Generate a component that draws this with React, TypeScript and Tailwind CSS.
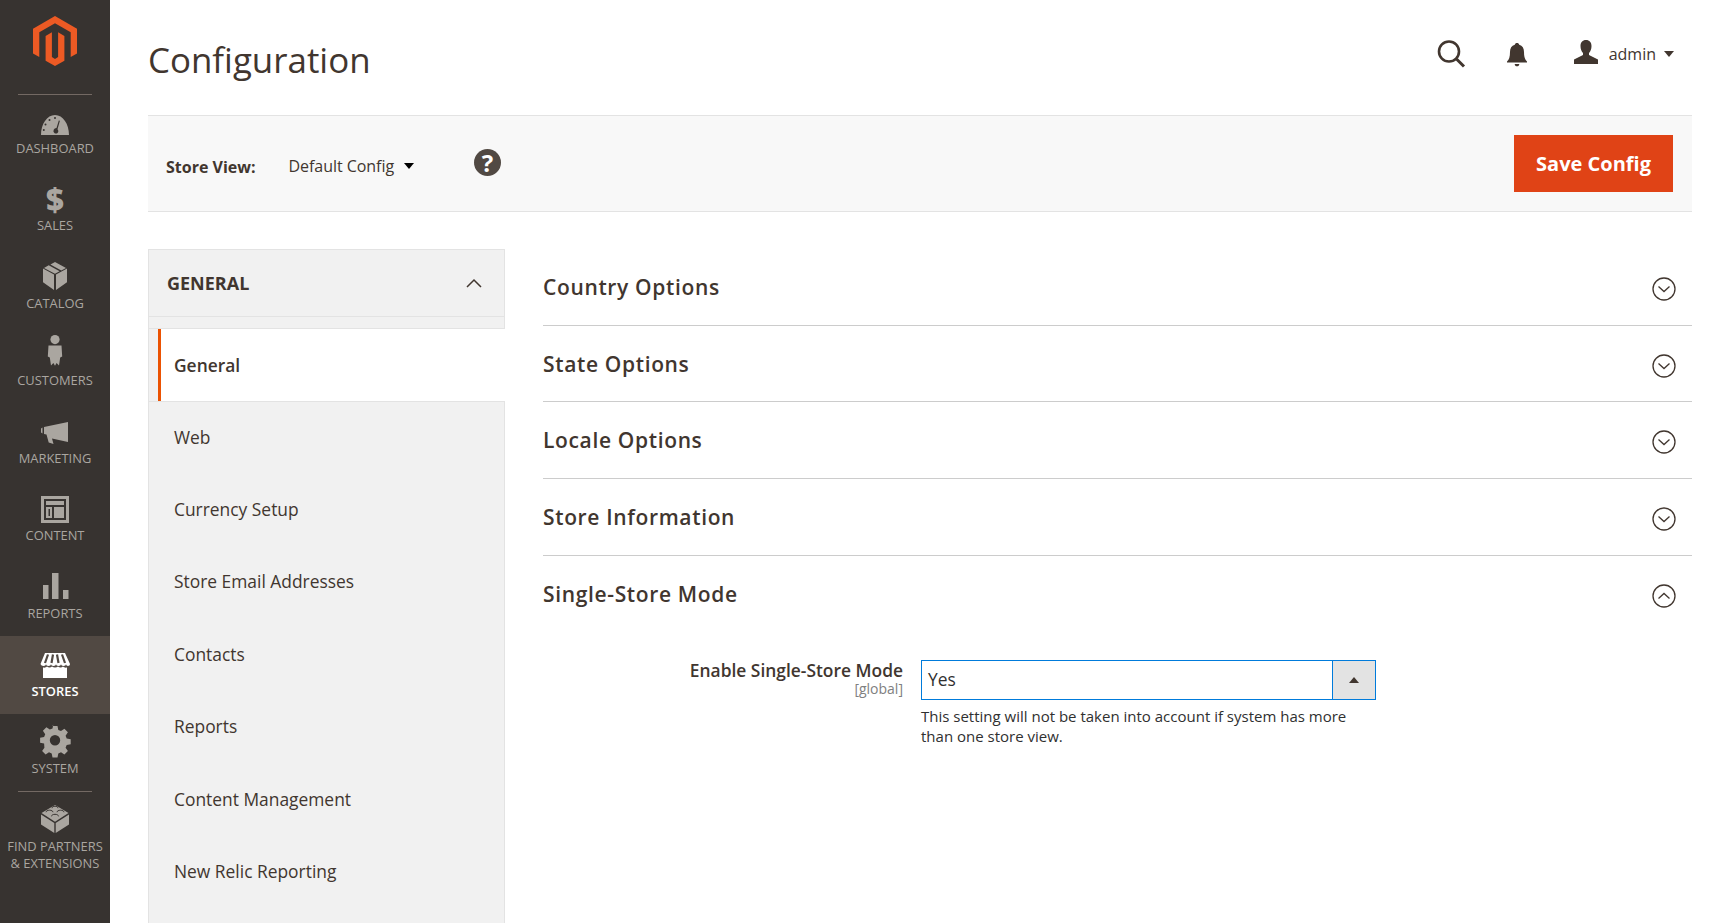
import React from "react";

const F = "font-['Open_Sans',sans-serif]";

const Ic = ({ children, w = 32, h = 32, vb = "0 0 32 32", cls = "fill-[#aaa6a0]" }: any) => (
  <svg width={w} height={h} viewBox={vb} className={`${cls} overflow-visible`}>{children}</svg>
);

const icons: Record<string, React.ReactNode> = {
  dashboard: (
    <Ic>
      <path fillRule="evenodd" d="M2 30C2 19 8 10 16 10s14 9 14 20H2ZM19.800 15.500l-2.300 7.600a3 3 0 0 0-2.800 1.600 2.900 2.900 0 0 0 .9 3.500c1.600 1 3.500.1 3.700-1.700.1-.9-.2-1.700-.8-2.200l2.400-8.600-1.100-.2ZM16 12a1 1 0 1 0 0 2 1 1 0 0 0 0-2ZM10.500 14a1 1 0 1 0 0 2 1 1 0 0 0 0-2ZM6.500 18.500a1 1 0 1 0 0 2 1 1 0 0 0 0-2ZM4.800 24a1 1 0 1 0 0 2 1 1 0 0 0 0-2Z" />
    </Ic>
  ),
  sales: <span className="block h-[32px] text-[31px] leading-[32px] font-extrabold text-[#aaa6a0]">$</span>,
  catalog: (
    <Ic>
      <path d="M15 14.500 4 8.500v13.800L15 30V14.500ZM17 14.500V30l11-7.700V8.500l-11 6ZM16 2l-4.600 2.400 10.900 6 4.700-2.500L16 2ZM9.700 5.300 5 7.900l11 5.900 4.600-2.500-10.900-6Z" />
    </Ic>
  ),
  customers: (
    <Ic vb="0 5.400 32 32">
      <circle cx="16" cy="7" r="4.600" />
      <path d="M9.500 13h13l.7 11-2 .8-1.200 8.200-2.400-2.500-1.600 2.700-1.600-2.700-2.400 2.500-1.200-8.200-2-.8.7-11Z" />
    </Ic>
  ),
  marketing: (
    <Ic>
      <path d="M29 7v20L13 23.500l1.500 5.500-4.800-1.500-2.200-8L5 19v-7L29 7ZM3.500 12.500v6L2 17.500v-4l1.500-1Z" />
    </Ic>
  ),
  content: (
    <Ic>
      <path fillRule="evenodd" d="M2 3h28v27H2V3Zm3 3v21h22V6H5Zm2 2h18v4H7V8Zm0 6h6v11H7V14Zm8 0h10v11H15V14Zm-5.500 2v7H11v-7H9.500Z" />
    </Ic>
  ),
  reports: (
    <Ic>
      <path d="M4 14h5.500v14H4V14ZM13 2h6.500v26H13V2ZM24 19h5.500v9H24v-9Z" />
    </Ic>
  ),
  stores: (
    <Ic cls="fill-white">
      <path d="M6 5h20l5 11c0 1-.8 2-2 2-1 0-2-.8-2-2 0 1-1 2-2.500 2S22 17 22 16c0 1-1 2-2.500 2S17 17 17 16c0 1-1 2-2.500 2S12 17 12 16c0 1-1 2-2.500 2S7 17 7 16c0 1-1 2-2.500 2C3 18 2 17 1.500 16L6 5Z" />
      <path d="M4 19.500c2 .5 3-.3 4-1 1.500 1.300 3.500 1.300 5 0 1.500 1.300 4.500 1.300 6 0 1.500 1.300 3.500 1.300 5 0 1 .7 2 1.500 4 1V30H4V19.500Z" />
      <path d="M9 6.500 6 15M14 6.500 12.500 15M18 6.500 19.500 15M23 6.500 26 15" stroke="#514943" strokeWidth="2.200" fill="none" />
    </Ic>
  ),
  system: (
    <Ic vb="0 2 32 32">
      <path fillRule="evenodd" d="M13.500 2h5l.8 4 2.700 1.100 3.400-2.300 3.500 3.500-2.300 3.400 1.100 2.700 4 .8v5l-4 .8-1.100 2.700 2.300 3.400-3.500 3.500-3.400-2.300-2.700 1.100-.8 4h-5l-.8-4-2.700-1.100-3.400 2.300-3.500-3.500 2.300-3.400L5.100 19.500l-4-.8v-5l4-.8 1.100-2.700-2.300-3.400 3.500-3.500 3.400 2.300 2.700-1.100.8-4ZM16 11a5.200 5.200 0 1 0 0 10.400A5.200 5.200 0 0 0 16 11Z" />
    </Ic>
  ),
  partners: (
    <Ic>
      <path d="M15.300 31 2 22.500v-10L15.300 21v10ZM16.700 31 30 22.500v-10L16.700 21v10ZM16 3 2.500 11 16 19.700 29.500 11 16 3Z" />
      <path d="M7 10.200c0-1.200 1.700-2 3.500-2s3.500.8 3.500 2M13 6.200c0-1.200 1.400-2 3-2s3 .8 3 2M18 10.200c0-1.200 1.700-2 3.500-2s3.500.8 3.500 2M12.500 14.300c0-1.200 1.600-2 3.500-2s3.500.8 3.500 2" fill="none" stroke="#373330" strokeWidth="1" />
    </Ic>
  ),
};

const NavItem = ({ icon, label, active }: { icon: string; label: string; active?: boolean }) => (
  <div className={`h-[77.600px] flex flex-col items-center pt-[12px] ${active ? "bg-[#514943] text-white font-semibold" : "text-[#aaa6a0]"}`}>
    <div className="h-[32px]">{icons[icon]}</div>
    <span className="text-[12.900px] leading-[14px] mt-[3.500px] uppercase">{label}</span>
  </div>
);

const Section = ({ title, open }: { title: string; open?: boolean }) => (
  <div className={`h-[76.700px] flex items-center justify-between ${open ? "" : "border-b border-[#cccccc]"}`}>
    <h3 className="text-[21px] font-semibold text-[#41362f] tracking-[0.65px] mt-[2px]">{title}</h3>
    <svg width="26" height="26" viewBox="0 0 26 26" className="mr-[15px] mt-[4px] fill-none stroke-[#41362f]" strokeWidth="1.300">
      <circle cx="13" cy="13" r="11" />
      <path d={open ? "M7.500 15.500 13 10.500l5.500 5" : "M7.500 10.500 13 15.500l5.500-5"} />
    </svg>
  </div>
);

const links = ["Web", "Currency Setup", "Store Email Addresses", "Contacts", "Reports", "Content Management", "New Relic Reporting"];

export default function App() {
  return (
    <div className={`${F} h-screen overflow-hidden flex bg-white text-[#41362f]`}>
      <aside className="w-[110px] shrink-0 bg-[#373330] flex flex-col">
        <div className="h-[95px] flex flex-col items-center">
          <svg width="44" height="50" viewBox="0 0 44 50" className="fill-[#ec5a24] mt-[16px]">
            <path d="M22 0 0 12.700v24.700L6.300 41V16.300L22 7.300l15.700 9V41l6.300-3.600V12.700L22 0Z" />
            <path d="M25.100 41.100 22 42.900l-3.100-1.800V16.300L12.600 20v24.700L22 50l9.400-5.300V20l-6.300-3.700v24.800Z" />
          </svg>
          <div className="w-[74px] h-px bg-[#736963] mt-auto" />
        </div>
        <div className="-mt-[2px]">
          <NavItem icon="dashboard" label="Dashboard" />
          <NavItem icon="sales" label="Sales" />
          <NavItem icon="catalog" label="Catalog" />
          <NavItem icon="customers" label="Customers" />
          <NavItem icon="marketing" label="Marketing" />
          <NavItem icon="content" label="Content" />
          <NavItem icon="reports" label="Reports" />
          <NavItem icon="stores" label="Stores" active />
          <NavItem icon="system" label="System" />
          <div className="w-[74px] h-px bg-[#736963] mx-auto" />
          <div className="flex flex-col items-center pt-[10px] text-[#aaa6a0] text-center">
            <div className="h-[32px]">{icons.partners}</div>
            <span className="text-[12.900px] leading-[16.500px] mt-[4px] uppercase">Find Partners<br />&amp; Extensions</span>
          </div>
        </div>
      </aside>

      <main className="flex-1 min-w-0 pl-[38px] pr-[37px]">
        <header className="h-[115px] flex items-start justify-between">
          <h1 className="text-[34.900px] leading-[46px] font-normal text-[#41362f] mt-[37px]">Configuration</h1>
          <div className="flex items-center mt-[39px] pr-[18px]">
            <svg width="30" height="30" viewBox="0 0 30 30" className="fill-none stroke-[#41362f] -mr-[3px] -translate-x-[3px]">
              <circle cx="13" cy="12.500" r="10" strokeWidth="2.600" />
              <path d="m20.500 20 7.500 7.500" strokeWidth="3" />
            </svg>
            <svg width="24" height="26" viewBox="0 0 24 26" className="fill-[#41362f] ml-[39px]">
              <path d="M12 2c1.200 0 2 .7 2.200 1.700C17.500 4.600 19 7.300 19 11c0 5 1 7.500 3 9.500v1H2v-1c2-2 3-4.500 3-9.500 0-3.700 1.500-6.400 4.800-7.300C10 2.700 10.800 2 12 2ZM9.700 23h4.600c0 1.400-1 2.300-2.300 2.300S9.700 24.400 9.700 23Z" />
            </svg>
            <svg width="26" height="24" viewBox="0 0 26 24" className="fill-[#41362f] ml-[44px] -mt-[4px]">
              <path d="M13 0c3.500 0 5.500 2.500 5.500 6 0 3-1 5.500-2.500 7v2l9 4.500V24H1v-4.500L10 15v-2C8.500 11.500 7.500 9 7.500 6c0-3.500 2-6 5.500-6Z" />
            </svg>
            <span className="text-[16px] ml-[10px] -mt-[1px]">admin</span>
            <span className="ml-[8px] -mt-[1px] w-0 h-0 border-x-[5.500px] border-x-transparent border-t-[6px] border-t-[#41362f]" />
          </div>
        </header>

        <div className="h-[97px] bg-[#f8f8f8] border-y border-[#e3e3e3] flex items-center justify-between pl-[18px] pr-[19px]">
          <div className="flex items-center mt-[5px]">
            <span className="text-[16px] font-bold text-[#41362f] mt-[2px]">Store View:</span>
            <span className="text-[16px] tracking-[-0.05px] text-[#41362f] ml-[33px]">Default Config</span>
            <span className="ml-[10px] w-0 h-0 border-x-[5.500px] border-x-transparent border-t-[6px] border-t-black" />
            <span className="ml-[60px] -mt-[7px] w-[27px] h-[27px] rounded-full bg-[#514943] text-white font-bold text-[24px] leading-[27px] text-center">?</span>
          </div>
          <button className="w-[159px] h-[57px] bg-[#e04316] text-white text-[20px] font-bold">Save Config</button>
        </div>

        <div className="flex mt-[37px]">
          <nav className="w-[357px] shrink-0 border-x border-[#e3e3e3] bg-[#f1f1f1] h-[800px]">
            <div className="h-[68px] border-y border-[#e3e3e3] flex items-center justify-between pl-[18px] pr-[22px] -mx-px border-x">
              <span className="text-[18px] font-bold text-[#41362f] uppercase">General</span>
              <svg width="16" height="10" viewBox="0 0 16 10" className="fill-none stroke-[#41362f]" strokeWidth="1.500"><path d="M1 9l7-7 7 7" /></svg>
            </div>
            <div className="h-[12px] border-b border-[#e3e3e3] -mx-px border-x" />
            <div className="ml-[9px] h-[72px] bg-white border-l-[3px] border-[#eb5202] flex items-center pl-[13px] text-[17.400px] font-semibold text-[#41362f] -mr-px">General</div>
            <div className="border-t border-[#e3e3e3] -mx-px" />
            <div className="-mt-[1.500px]">
              {links.map((l) => (
                <div key={l} className="h-[72.400px] flex items-center pl-[25px] text-[17.400px] text-[#41362f]">{l}</div>
              ))}
            </div>
          </nav>

          <div className="flex-1 min-w-0 pl-[38px]">
            <Section title="Country Options" />
            <Section title="State Options" />
            <Section title="Locale Options" />
            <Section title="Store Information" />
            <Section title="Single-Store Mode" open />
            <div className="flex mt-[27.500px]">
              <div className="w-[360px] shrink-0 text-right">
                <div className="text-[17.400px] leading-[22px] -mt-[1px] font-semibold text-[#41362f]">Enable Single-Store Mode</div>
                <div className="text-[14px] leading-[16px] text-[#808080]">[global]</div>
              </div>
              <div className="ml-[18px] w-[455px]">
                <div className="h-[40px] flex border border-[#007bdb]">
                  <div className="flex-1 flex items-center pl-[6px] pb-[2px] text-[17.400px] text-[#303030]">Yes</div>
                  <div className="w-[43px] bg-[#e3e3e3] border-l border-[#007bdb] flex items-center justify-center">
                    <span className="w-0 h-0 border-x-[5px] border-x-transparent border-b-[6px] border-b-[#41362f]" />
                  </div>
                </div>
                <p className="text-[15px] leading-[20px] text-[#303030] mt-[6px]">This setting will not be taken into account if system has more than one store view.</p>
              </div>
            </div>
          </div>
        </div>
      </main>
    </div>
  );
}
